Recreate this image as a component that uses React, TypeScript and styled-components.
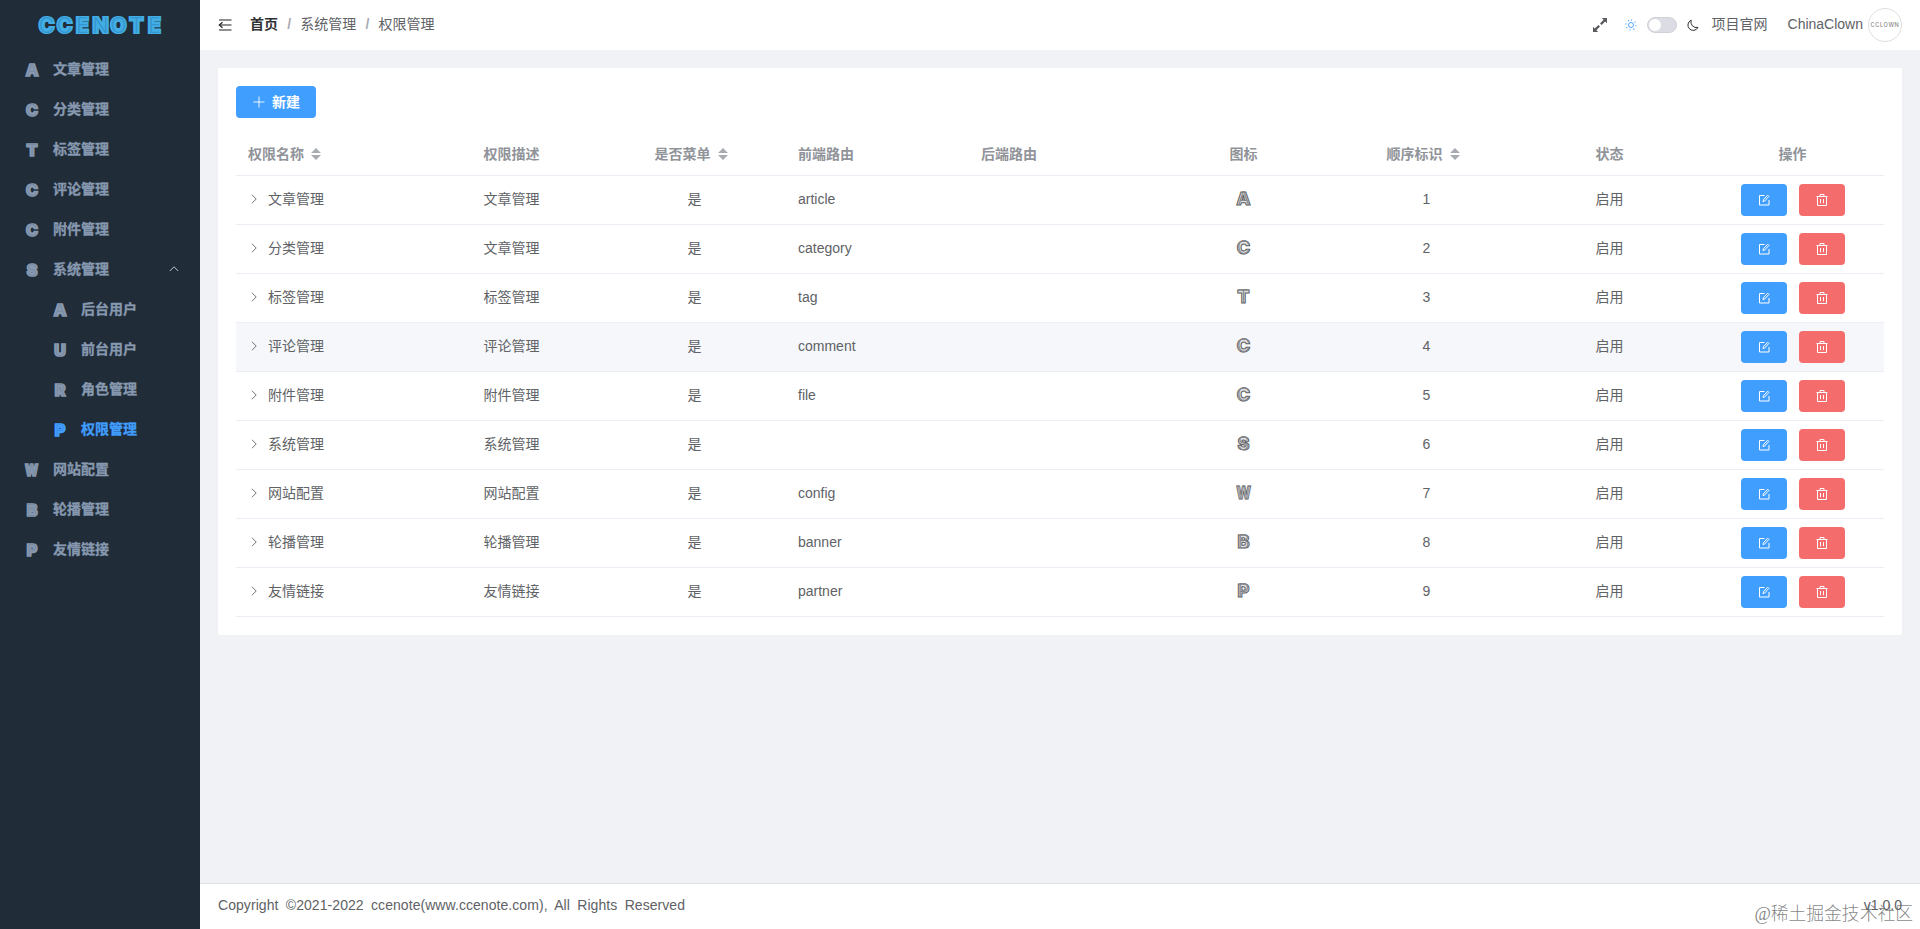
import React from "react";
import styled, { createGlobalStyle } from "styled-components";

const GlobalStyle = createGlobalStyle`
  * { box-sizing: border-box; }
  body {
    margin: 0;
    color: #606266;
    font: 14px/20px "Liberation Sans", "Noto Sans CJK SC", sans-serif;
    overflow: hidden;
  }
`;

const Shell = styled.div`
  display: flex;
  height: 100vh;
  min-height: 929px;
  background: #f0f2f5;
`;

const Sidebar = styled.aside`
  width: 200px;
  flex: none;
  background: #202c37;
`;

const Logo = styled.div`
  height: 49px;
  padding: 2px 0 0 1px;
  display: flex;
  align-items: center;
  justify-content: center;
  gap: 1px;
`;

/* Display capital with a thin line running inside its strokes. */
const Glyph = styled.span<{ $squeeze?: boolean }>`
  position: relative;
  display: inline-block;
  text-align: center;
  font-family: Inter, sans-serif;
  font-weight: 900;
  transform: ${(p) => (p.$squeeze ? "scaleX(0.76)" : "none")};

  &::after {
    content: attr(data-letter);
    position: absolute;
    inset: 0;
    font-weight: 300;
    -webkit-text-stroke: 0;
  }
`;

const LogoGlyph = styled(Glyph)`
  min-width: 17px;
  color: #43aee6;
  font-size: 21px;
  line-height: 46px;
  -webkit-text-stroke: 2.2px #43aee6;

  &::after {
    color: #3596cf;
  }
`;

const MenuItem = styled.div<{ $nested?: boolean; $active?: boolean }>`
  display: flex;
  align-items: center;
  height: 40px;
  padding: 0 20px 0 ${(p) => (p.$nested ? 48 : 20)}px;
  color: ${(p) => (p.$active ? "#409eff" : "#8799b0")};
  font-weight: 700;
  -webkit-text-stroke: 0.3px currentColor;
`;

const MenuLetter = styled.span`
  display: flex;
  justify-content: center;
  width: 24px;
  margin-right: 9px;
`;

const MenuGlyph = styled(Glyph)`
  font-size: 16px;
  line-height: 20px;
  padding-top: 2px;
  -webkit-text-stroke: 1.7px currentColor;

  &::after {
    top: 2px;
    color: rgba(32, 44, 55, 0.14);
  }
`;

const MenuArrow = styled.svg`
  width: 12px;
  height: 12px;
  margin-left: auto;
`;

const Main = styled.div`
  display: flex;
  flex-direction: column;
  flex: 1;
  min-width: 0;
`;

const Topbar = styled.header`
  display: flex;
  align-items: center;
  height: 50px;
  padding: 0 18px;
  background: #fff;
`;

const FoldIcon = styled.svg`
  width: 14px;
  height: 14px;
  margin-right: 18px;
`;

const Crumb = styled.span<{ $root?: boolean }>`
  color: ${(p) => (p.$root ? "#303133" : "#606266")};
  font-weight: ${(p) => (p.$root ? 700 : 400)};
  margin-top: -2px;
`;

const Separator = styled.span`
  margin: -2px 9.2px 0;
  color: #a8abb2;
  font-weight: 700;
`;

const Tools = styled.div`
  display: flex;
  align-items: center;
  margin-left: auto;
`;

const ToolIcon = styled.svg<{ $gap: number }>`
  width: 14px;
  height: 14px;
  margin-right: ${(p) => p.$gap}px;
`;

const Switch = styled.span`
  width: 30px;
  height: 16px;
  margin-right: 9px;
  padding: 1px;
  border: 1px solid #d0d1d8;
  border-radius: 8px;
  background: #dcdde4;

  &::before {
    content: "";
    display: block;
    width: 12px;
    height: 12px;
    border-radius: 50%;
    background: #fff;
  }
`;

const SiteLink = styled.span`
  margin: -2px 20px 0 0;
`;

const UserName = styled.span`
  margin-top: -2px;
`;

const Avatar = styled.span`
  display: flex;
  align-items: center;
  justify-content: center;
  width: 34px;
  height: 34px;
  margin-left: 5px;
  border: 1px solid #dfdfe1;
  border-radius: 50%;
  color: #888;
  font: 500 5.6px/8px Inter, sans-serif;
  letter-spacing: 0.6px;
`;

const Content = styled.main`
  flex: 1;
  padding: 18px;
`;

const Card = styled.section`
  padding: 18px;
  background: #fff;
  border-radius: 2px;
`;

const CreateButton = styled.button`
  display: flex;
  align-items: center;
  justify-content: center;
  gap: 7px;
  width: 80px;
  height: 32px;
  margin: 0 0 15px;
  padding: 0 0 1px 1px;
  border: 0;
  border-radius: 4px;
  background: #409eff;
  color: #fff;
  font: inherit;
  font-weight: 700;
`;

const Row = styled.div<{ $head?: boolean; $hover?: boolean }>`
  display: grid;
  grid-template-columns: 184px repeat(8, 183px);
  align-items: center;
  height: ${(p) => (p.$head ? 43 : 49)}px;
  border-bottom: 1px solid #ebeef5;
  background: ${(p) => (p.$hover ? "#f5f7fa" : "transparent")};
  color: ${(p) => (p.$head ? "#909399" : "#606266")};
  font-weight: ${(p) => (p.$head ? 700 : 400)};
`;

const Cell = styled.div<{ $left?: boolean; $raise?: boolean }>`
  display: flex;
  align-items: center;
  justify-content: ${(p) => (p.$left ? "flex-start" : "center")};
  padding: 0 12px ${(p) => (p.$raise ? 2 : 0)}px;
`;

const SortIcon = styled.svg`
  width: 10px;
  height: 12px;
  margin: 0 7px;
`;

const ExpandIcon = styled.svg`
  width: 12px;
  height: 12px;
  margin: -1px 8px 0 0;
`;

const TableGlyph = styled(Glyph)`
  color: #e4e4e6;
  font-size: 18px;
  line-height: 20px;
  -webkit-text-stroke: 1px #5c5e62;

  &::after {
    color: #85878c;
  }
`;

const ActionButton = styled.button<{ $danger?: boolean }>`
  display: flex;
  align-items: center;
  justify-content: center;
  width: 46px;
  height: 32px;
  padding: 0;
  border: 0;
  border-radius: 4px;
  background: ${(p) => (p.$danger ? "#f56c6c" : "#409eff")};

  & + & {
    margin-left: 12px;
  }
`;

const Footer = styled.footer`
  position: relative;
  display: flex;
  align-items: center;
  justify-content: space-between;
  height: 46px;
  padding: 0 18px 3px;
  border-top: 1px solid #dcdfe6;
  background: #fff;
`;

const Copyright = styled.span`
  letter-spacing: 0.06px;
  word-spacing: 3.4px;
`;

const Watermark = styled.span`
  position: absolute;
  right: 7px;
  bottom: 3px;
  color: rgba(90, 90, 90, 0.75);
  font: 300 17.8px/24px "Liberation Serif", "Noto Sans CJK SC", serif;
  white-space: nowrap;
`;

type Item = { letter: string; label: string; nested?: boolean; active?: boolean; open?: boolean };

const menu: Item[] = [
  { letter: "A", label: "文章管理" },
  { letter: "C", label: "分类管理" },
  { letter: "T", label: "标签管理" },
  { letter: "C", label: "评论管理" },
  { letter: "C", label: "附件管理" },
  { letter: "S", label: "系统管理", open: true },
  { letter: "A", label: "后台用户", nested: true },
  { letter: "U", label: "前台用户", nested: true },
  { letter: "R", label: "角色管理", nested: true },
  { letter: "P", label: "权限管理", nested: true, active: true },
  { letter: "W", label: "网站配置" },
  { letter: "B", label: "轮播管理" },
  { letter: "P", label: "友情链接" },
];

const rows = [
  ["文章管理", "文章管理", "article", "A"],
  ["分类管理", "文章管理", "category", "C"],
  ["标签管理", "标签管理", "tag", "T"],
  ["评论管理", "评论管理", "comment", "C"],
  ["附件管理", "附件管理", "file", "C"],
  ["系统管理", "系统管理", "", "S"],
  ["网站配置", "网站配置", "config", "W"],
  ["轮播管理", "轮播管理", "banner", "B"],
  ["友情链接", "友情链接", "partner", "P"],
];

const columns = [
  { label: "权限名称", left: true, sort: true },
  { label: "权限描述" },
  { label: "是否菜单", sort: true },
  { label: "前端路由", left: true },
  { label: "后端路由", left: true },
  { label: "图标" },
  { label: "顺序标识", sort: true },
  { label: "状态" },
  { label: "操作" },
];

const Sort = () => (
  <SortIcon viewBox="0 0 10 12" fill="#a8abb2">
    <path d="M5 0 10 5H0zM5 12 0 7h10z" />
  </SortIcon>
);

const EditIcon = () => (
  <svg width="14" height="14" viewBox="0 0 14 14" fill="none" stroke="#fff" strokeWidth="1">
    <path d="M7.500 2.500h-5v9.500h9.500v-5" />
    <path d="M6 8.600 6.300 6.900 10.700 2.200 11.900 3.400 7.600 8.100z" />
  </svg>
);

const TrashIcon = () => (
  <svg width="14" height="14" viewBox="0 0 14 14" fill="none" stroke="#fff" strokeWidth="1">
    <path d="M1.500 3.500h11M5 3.300V1.500h4v1.800M2.500 3.500v9h9v-9M5.500 6v4.200M8.500 6v4.200" />
  </svg>
);

export default function App() {
  return (
    <Shell>
      <GlobalStyle />
      <Sidebar>
        <Logo>
          {"CCENOTE".split("").map((c, i) => (
            <LogoGlyph key={i} data-letter={c}>
              {c}
            </LogoGlyph>
          ))}
        </Logo>
        {menu.map((m) => (
          <MenuItem key={m.label} $nested={m.nested} $active={m.active}>
            <MenuLetter>
              <MenuGlyph data-letter={m.letter} $squeeze={m.letter === "W"}>
                {m.letter}
              </MenuGlyph>
            </MenuLetter>
            {m.label}
            {m.open && (
              <MenuArrow viewBox="0 0 12 12" fill="none" stroke="#bcc5d0">
                <path d="M1.800 8 6 3.800 10.200 8" />
              </MenuArrow>
            )}
          </MenuItem>
        ))}
      </Sidebar>
      <Main>
        <Topbar>
          <FoldIcon viewBox="0 0 14 14" fill="none" stroke="#222" strokeWidth="1.200">
            <path d="M1 2h12.500M2 7h11.500M1 12h12.500" />
            <path d="M4.500 4.300 1.300 7l3.200 2.700" />
          </FoldIcon>
          <Crumb $root>首页</Crumb>
          <Separator>/</Separator>
          <Crumb>系统管理</Crumb>
          <Separator>/</Separator>
          <Crumb>权限管理</Crumb>
          <Tools>
            <ToolIcon $gap={17} viewBox="0 0 14 14" fill="#5a5b5e">
              <path d="M8.800 0H14v5.200L12.200 3.400 8.600 7 7 5.400 10.600 1.800z" />
              <path d="M5.200 14H0V8.800L1.800 10.600 5.400 7 7 8.600 3.400 12.200z" />
            </ToolIcon>
            <ToolIcon $gap={9} viewBox="0 0 14 14" fill="none" stroke="#409eff" strokeWidth="0.900">
              <circle cx="7" cy="7" r="2.500" />
              <path
                strokeDasharray="1.100 2.826"
                strokeWidth="1.100"
                d="M7 2a5 5 0 1 1 0 10a5 5 0 1 1 0-10"
              />
            </ToolIcon>
            <Switch />
            <ToolIcon $gap={12} viewBox="0 0 14 14" fill="none" stroke="#303133" strokeWidth="1">
              <path d="M5.200 2.200A5.300 5.300 0 1 0 12 9.400 5.600 5.600 0 0 1 5.200 2.200z" />
            </ToolIcon>
            <SiteLink>项目官网</SiteLink>
            <UserName>ChinaClown</UserName>
            <Avatar>CCLOWN</Avatar>
          </Tools>
        </Topbar>
        <Content>
          <Card>
            <CreateButton>
              <svg width="12" height="12" viewBox="0 0 12 12" stroke="#fff" strokeWidth="0.900">
                <path d="M6 .5v11M.5 6h11" />
              </svg>
              新建
            </CreateButton>
            <Row $head>
              {columns.map((c) => (
                <Cell key={c.label} $left={c.left}>
                  {c.label}
                  {c.sort && <Sort />}
                </Cell>
              ))}
            </Row>
            {rows.map(([name, desc, route, letter], i) => (
              <Row key={name} $hover={i === 3}>
                <Cell $left $raise>
                  <ExpandIcon viewBox="0 0 12 12" fill="none" stroke="#606266" strokeWidth="0.900">
                    <path d="M4 1.800 8.200 6 4 10.200" />
                  </ExpandIcon>
                  {name}
                </Cell>
                <Cell $raise>{desc}</Cell>
                <Cell $raise>是</Cell>
                <Cell $left $raise>{route}</Cell>
                <Cell />
                <Cell $raise>
                  <TableGlyph data-letter={letter} $squeeze={letter === "W"}>
                    {letter}
                  </TableGlyph>
                </Cell>
                <Cell $raise>{i + 1}</Cell>
                <Cell $raise>启用</Cell>
                <Cell>
                  <ActionButton>
                    <EditIcon />
                  </ActionButton>
                  <ActionButton $danger>
                    <TrashIcon />
                  </ActionButton>
                </Cell>
              </Row>
            ))}
          </Card>
        </Content>
        <Footer>
          <Copyright>Copyright ©2021-2022 ccenote(www.ccenote.com), All Rights Reserved</Copyright>
          <span>v1.0.0</span>
          <Watermark>@稀土掘金技术社区</Watermark>
        </Footer>
      </Main>
    </Shell>
  );
}
